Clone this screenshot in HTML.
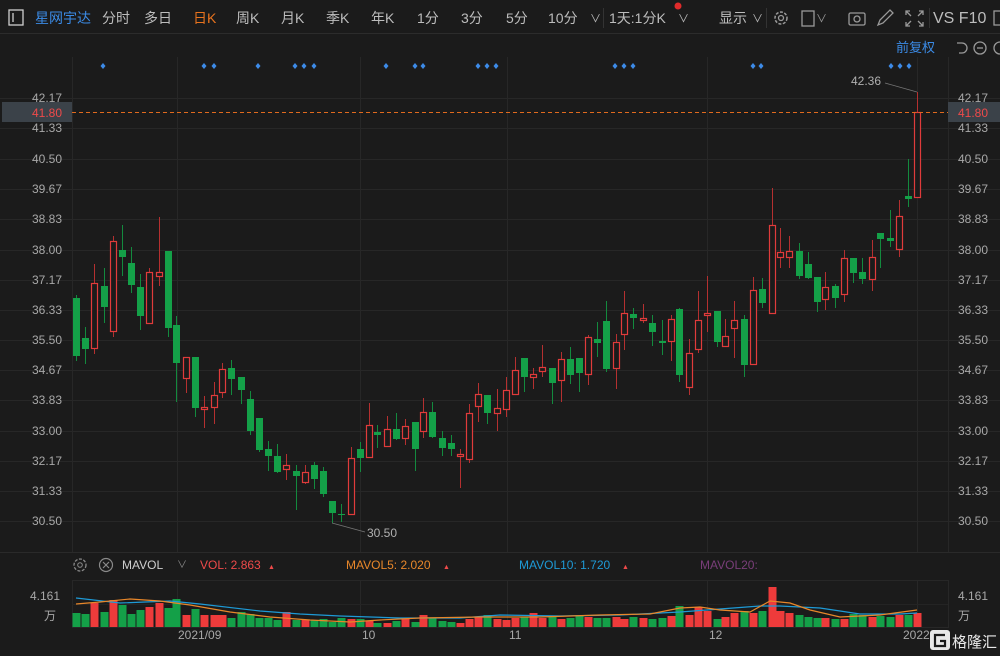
<!DOCTYPE html>
<html><head><meta charset="utf-8"><style>
body{margin:0;width:1000px;height:656px;background:#1b1b1b;overflow:hidden;font-family:"Liberation Sans","Noto Sans CJK SC",sans-serif;}
svg{position:absolute;left:0;top:0}
</style></head><body>
<svg id="s" width="1000" height="656" xmlns="http://www.w3.org/2000/svg" font-family="Liberation Sans, Noto Sans CJK SC, sans-serif">
<rect width="1000" height="656" fill="#1b1b1b"/>
<line x1="0" y1="33.5" x2="1000" y2="33.5" stroke="#2c2c2c"/>
<rect x="9" y="10" width="14" height="15" fill="none" stroke="#cfcfcf" stroke-width="1.3"/>
<line x1="13" y1="13" x2="13" y2="22" stroke="#cfcfcf" stroke-width="1.3"/>
<g font-size="14" fill="#bdbdbd">
<text x="35" y="23" fill="#3b8be6">星网宇达</text>
<text x="102" y="23">分时</text><text x="144" y="23">多日</text>
<text x="193" y="23" fill="#e8731e">日K</text>
<text x="236" y="23">周K</text><text x="281" y="23">月K</text><text x="326" y="23">季K</text>
<text x="371" y="23">年K</text><text x="417" y="23">1分</text><text x="461" y="23">3分</text>
<text x="506" y="23">5分</text><text x="548" y="23">10分</text>
<text x="590" y="22" font-size="11">∨</text>
<text x="609" y="23">1天:1分K</text><text x="678" y="22" font-size="11">∨</text>
<text x="719" y="23">显示</text><text x="752" y="22" font-size="11">∨</text>
<text x="933" y="23" font-size="16">VS F10</text>
</g>
<line x1="603.5" y1="8" x2="603.5" y2="28" stroke="#333"/>
<line x1="766.5" y1="8" x2="766.5" y2="28" stroke="#333"/>
<line x1="929.5" y1="8" x2="929.5" y2="28" stroke="#333"/>
<circle cx="678" cy="6" r="3.5" fill="#e02b2b"/>
<circle cx="781" cy="18" r="6" fill="none" stroke="#9a9a9a" stroke-width="1.5" stroke-dasharray="3 1.5"/><circle cx="781" cy="18" r="2.5" fill="none" stroke="#9a9a9a" stroke-width="1.3"/>
<rect x="802" y="11" width="12" height="15" fill="none" stroke="#9a9a9a" stroke-width="1.3"/>
<text x="816" y="22" font-size="11" fill="#9a9a9a">∨</text>
<rect x="849" y="13" width="16" height="12" rx="1.5" fill="none" stroke="#9a9a9a" stroke-width="1.3"/><circle cx="857" cy="19" r="3" fill="none" stroke="#9a9a9a" stroke-width="1.3"/>
<path d="M878 25 L880 20 L890 10 L893 13 L883 23 Z" fill="none" stroke="#9a9a9a" stroke-width="1.3"/>
<path d="M906 15v-4h4M919 11h4v4M906 22v4h4M919 26h4v-4M906 11l5 5M923 11l-5 5M906 26l5-5M923 26l-5-5" fill="none" stroke="#9a9a9a" stroke-width="1.3"/>
<rect x="994" y="11" width="10" height="14" fill="none" stroke="#9a9a9a" stroke-width="1.3"/>
<text x="896" y="52" font-size="13" fill="#3b8be6">前复权</text>
<path d="M957 43 h5 a5 5 0 1 1 0 10 h-3" fill="none" stroke="#9a9a9a" stroke-width="1.3"/>
<circle cx="980" cy="48" r="6" fill="none" stroke="#9a9a9a" stroke-width="1.3"/><line x1="977" y1="48" x2="983" y2="48" stroke="#9a9a9a" stroke-width="1.3"/>
<circle cx="1000" cy="48" r="6" fill="none" stroke="#9a9a9a" stroke-width="1.3"/>
<g id="grid"></g>
<g id="cd"></g>
<g id="vol"></g>
</svg>
<script>
var NS="http://www.w3.org/2000/svg",s=document.getElementById('s');
function el(t,a,p){var e=document.createElementNS(NS,t);for(var k in a)e.setAttribute(k,a[k]);(p||s).appendChild(e);return e;}
function tx(x,y,str,c,sz,anch){var e=el('text',{x:x,y:y,fill:c,'font-size':sz||12});if(anch)e.setAttribute('text-anchor',anch);e.textContent=str;return e;}
var g=document.getElementById('grid');
[72,177,360,507,707,917,948].forEach(function(x){el('line',{x1:x+.5,y1:57,x2:x+.5,y2:552,stroke:'#272727'},g);el('line',{x1:x+.5,y1:580,x2:x+.5,y2:628,stroke:'#272727'},g);});
var L=[["42.17",98],["41.33",128],["40.50",159],["39.67",189],["38.83",219],["38.00",250],["37.17",280],["36.33",310],["35.50",340],["34.67",370],["33.83",400],["33.00",431],["32.17",461],["31.33",491],["30.50",521]];
L.forEach(function(l){el('line',{x1:0,y1:l[1]+.5,x2:1000,y2:l[1]+.5,stroke:'#272727'},g);tx(62,l[1]+4,l[0],'#a8a8a8',12,'end');tx(958,l[1]+4,l[0],'#a8a8a8',12);});
el('line',{x1:0,y1:552.5,x2:1000,y2:552.5,stroke:'#2a2a2a'},g);
el('line',{x1:72,y1:580.5,x2:948,y2:580.5,stroke:'#272727'},g);
el('line',{x1:72,y1:627.5,x2:948,y2:627.5,stroke:'#272727'},g);
el('line',{x1:72,y1:604.5,x2:948,y2:604.5,stroke:'#242424'},g);
[103,204,214,258,295,304,314,386,415,423,478,487,496,615,624,633,753,761,891,900,909].forEach(function(x){el('path',{d:'M'+x+' 63l2.5 3-2.5 3-2.5-3z',fill:'#3d8be8'},g);});
var C=[[76,298,356,295,361,0],[85,338,349,327,364,0],[94,283,348,264,354,1],[104,286,307,268,323,0],[113,241,331,236,337,1],[122,250,257,225,276,0],[131,263,285,247,293,0],[140,287,316,274,330,0],[149,272,323,268,323,1],[159,272,276,217,286,1],[168,251,328,251,337,0],[176,325,363,316,402,0],[186,357,378,357,393,1],[195,357,408,357,417,0],[204,407,409,396,428,1],[214,395,407,382,424,1],[222,369,392,363,398,1],[231,368,379,360,395,0],[241,377,390,377,404,0],[250,399,431,391,435,0],[259,418,450,418,452,0],[268,449,456,441,471,0],[277,456,472,444,473,0],[286,465,469,454,480,1],[296,471,476,465,510,0],[305,472,482,465,484,1],[314,465,479,462,489,0],[323,471,494,467,497,0],[332,501,513,501,523,0],[341,514,515,504,522,0],[351,458,514,447,514,1],[360,449,458,442,472,0],[369,425,457,403,457,1],[377,432,435,425,448,0],[387,429,446,416,446,1],[396,429,439,413,440,0],[405,426,438,419,445,1],[415,422,449,422,471,0],[423,412,431,398,438,1],[432,412,437,402,438,0],[442,438,448,431,456,0],[451,443,449,435,456,0],[460,454,456,449,488,1],[469,413,459,404,463,1],[478,394,406,383,422,1],[487,395,413,395,424,0],[497,408,413,389,431,1],[506,390,409,377,417,1],[515,370,394,357,394,1],[524,358,377,358,392,0],[533,374,377,368,389,1],[542,367,371,345,377,1],[552,368,383,368,404,0],[561,359,380,352,402,1],[570,359,375,347,384,0],[579,358,373,358,392,0],[588,337,374,335,385,1],[597,339,343,322,357,0],[606,321,369,301,372,0],[616,342,368,334,389,1],[624,313,334,291,350,1],[633,314,318,308,329,0],[643,318,320,304,323,1],[652,323,332,315,346,0],[662,341,343,320,355,0],[671,319,341,315,361,1],[679,309,375,308,382,0],[689,353,387,339,395,1],[698,320,349,291,353,1],[707,313,315,276,332,1],[717,311,342,311,347,0],[725,336,346,319,346,1],[734,320,328,301,358,1],[744,319,365,315,377,0],[753,290,364,277,364,1],[762,289,303,278,308,0],[772,225,313,188,313,1],[780,252,257,228,268,1],[789,251,257,236,268,1],[799,251,276,243,279,0],[808,264,278,252,279,0],[817,277,302,277,312,0],[825,287,299,272,310,1],[835,286,298,284,308,0],[844,258,294,250,302,1],[853,258,273,258,283,0],[862,272,279,258,284,0],[872,257,279,240,291,1],[880,233,239,233,268,0],[890,238,241,210,247,0],[899,216,249,200,257,1],[908,196,199,159,207,0],[917,112,197,92,197,1]];
var cd=document.getElementById('cd');
var RED='#e03b3b',RW='#b53030',GR='#14a048',GW='#138a3e';
C.forEach(function(c){var x=c[0],w=7;
 el('line',{x1:x+.5,y1:c[3],x2:x+.5,y2:c[4],stroke:c[5]?RW:GW,'stroke-width':1},cd);
 var h=Math.max(1,c[2]-c[1]);
 if(c[5]){el('rect',{x:x-2.5,y:c[1]+.5,width:w-1,height:h,fill:'#1b1b1b',stroke:RED,'stroke-width':1.2},cd);}
 else el('rect',{x:x-3,y:c[1],width:w,height:h,fill:GR},cd);
});
el('line',{x1:72,y1:112.5,x2:948,y2:112.5,stroke:'#e06a1e','stroke-dasharray':'4 3'},cd);
el('rect',{x:2,y:102,width:70,height:20,fill:'#3b4249'},cd);tx(62,117,'41.80','#ef4a4a',12,'end');
el('rect',{x:948,y:102,width:52,height:20,fill:'#3b4249'},cd);tx(958,117,'41.80','#ef4a4a',12);
el('line',{x1:917,y1:92,x2:885,y2:83,stroke:'#777','stroke-width':.8},cd);tx(851,85,'42.36','#b0b0b0',12);
el('line',{x1:332,y1:523,x2:365,y2:532,stroke:'#777','stroke-width':.8},cd);tx(367,537,'30.50','#b0b0b0',12);
var V=[14,13,24,15,27,22,13,17,20,24,19,28,12,18,12,12,12,9,15,13,9,9,7,15,7,7,7,8,5,9,8,8,6,4,4,6,8,5,12,9,6,5,4,8,10,12,8,7,9,10,14,9,10,8,9,11,10,9,9,10,
8,10,9,8,9,11,21,12,20,16,8,10,14,16,14,16,40,16,14,12,10,9,9,8,8,13,12,10,11,10,12,12,14,14,20];
var vg=document.getElementById('vol');
C.forEach(function(c,i){var h=V[i]||8;el('rect',{x:c[0]-3.5,y:627-h,width:8,height:h,fill:c[5]?'#ee3b3b':'#14a048'},vg);});
el('polyline',{points:'76,598 120,603 170,601 200,604 260,611 300,614 340,616 400,618 460,618 500,615 560,616 620,615 680,612 720,609 760,606 780,606 820,608 860,614 900,614 917,613',fill:'none',stroke:'#1e9ad6','stroke-width':1.2},vg);
el('polyline',{points:'76,604 100,602 130,599 160,601 190,605 230,612 270,617 310,620 350,622 380,620 420,618 480,617 540,617 600,615 650,614 680,608 700,607 720,610 750,612 770,601 790,603 810,610 840,617 880,615 917,610',fill:'none',stroke:'#e8872a','stroke-width':1.2},vg);
tx(30,600,'4.161','#a8a8a8',12);tx(44,620,'万','#a8a8a8',12);
tx(958,600,'4.161','#a8a8a8',12);tx(958,620,'万','#a8a8a8',12);
el('circle',{cx:80,cy:565,r:6,fill:'none',stroke:'#8a8a8a','stroke-width':1.3,'stroke-dasharray':'3 1.5'});el('circle',{cx:80,cy:565,r:2.3,fill:'none',stroke:'#8a8a8a'});
el('circle',{cx:106,cy:565,r:6.5,fill:'none',stroke:'#8a8a8a','stroke-width':1.2});el('path',{d:'M103 562l6 6M109 562l-6 6',stroke:'#8a8a8a','stroke-width':1.2});
tx(122,569,'MAVOL','#cfcfcf',12);tx(177,568,'∨','#8a8a8a',10);
tx(200,569,'VOL: 2.863','#ef4a4a',12);tx(268,569,'▲','#ef4a4a',7);
tx(346,569,'MAVOL5: 2.020','#e8872a',12);tx(443,569,'▲','#ef4a4a',7);
tx(519,569,'MAVOL10: 1.720','#1e9ad6',12);tx(622,569,'▲','#ef4a4a',7);
tx(700,569,'MAVOL20:','#7a3e7a',12);
tx(178,639,'2021/09','#a8a8a8',12);tx(362,639,'10','#a8a8a8',12);tx(509,639,'11','#a8a8a8',12);tx(709,639,'12','#a8a8a8',12);tx(903,639,'2022','#a8a8a8',12);
el('rect',{x:930,y:630,width:20,height:20,rx:3,fill:'#e8e8e8'});el('path',{d:'M945 635h-10v11h10v-5h-5',fill:'none',stroke:'#1b1b1b','stroke-width':2.2});
tx(952,647,'格隆汇','#e8e8e8',15);
</script>
</body></html>
